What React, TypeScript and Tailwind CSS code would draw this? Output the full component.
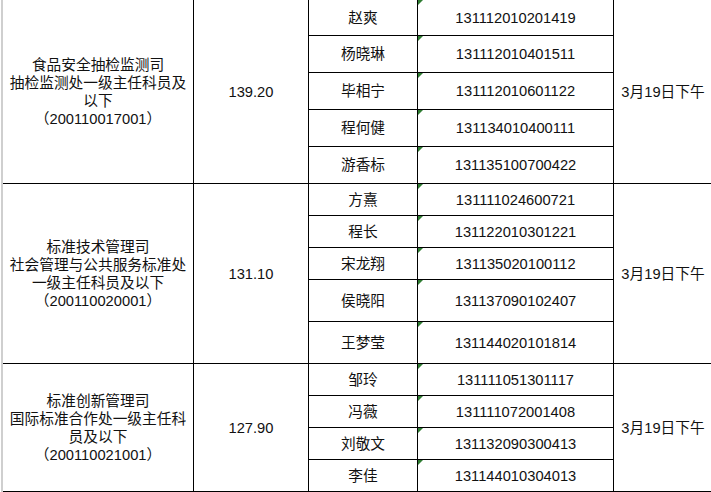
import React from "react";

type Group = {
  title: string[];
  score: string;
  people: [string, string][];
  rows: string[]; // row heights classes not needed
};

const groups = [
  {
    title: ["食品安全抽检监测司", "抽检监测处一级主任科员及", "以下", "（200110017001）"],
    score: "139.20",
    people: [
      ["赵爽", "131112010201419"],
      ["杨晓琳", "131112010401511"],
      ["毕相宁", "131112010601122"],
      ["程何健", "131134010400111"],
      ["游香标", "131135100700422"],
    ],
  },
  {
    title: ["标准技术管理司", "社会管理与公共服务标准处", "一级主任科员及以下", "（200110020001）"],
    score: "131.10",
    people: [
      ["方熹", "131111024600721"],
      ["程长", "131122010301221"],
      ["宋龙翔", "131135020100112"],
      ["侯晓阳", "131137090102407"],
      ["王梦莹", "131144020101814"],
    ],
  },
  {
    title: ["标准创新管理司", "国际标准合作处一级主任科", "员及以下", "（200110021001）"],
    score: "127.90",
    people: [
      ["邹玲", "131111051301117"],
      ["冯薇", "131111072001408"],
      ["刘敬文", "131132090300413"],
      ["李佳", "131144010304013"],
    ],
  },
];

const Tri = () => (
  <svg className="absolute left-0 top-0" width="5" height="5" viewBox="0 0 5 5">
    <polygon points="0,0 5,0 0,5" fill="#2f7d32" />
  </svg>
);

const cell = "flex items-center justify-center border-b border-r border-black text-center";

export default function App() {
  const font = { fontFamily: '"Liberation Sans", "Noto Sans CJK SC", sans-serif' };
  return (
    <div
      className="flex h-[492px] w-[711px] overflow-hidden bg-white text-[14.7px] leading-[18px] text-[#111]"
      style={font}
    >
      <div className="w-px shrink-0" />
      <div className="w-[2px] shrink-0 bg-[#cfcfcf]" />
      <div className="grid shrink-0 grid-cols-[191px_115px_109px_196px_98px] grid-rows-[36px_37px_37px_37px_37px_32px_32px_32px_42px_42px_32px_32px_32px_32px]">
        {/* Group 1 */}
        <div className={`${cell} col-start-1 row-start-1 row-span-5 flex-col`}>
          {groups[0].title.map((t) => (
            <div key={t}>{t}</div>
          ))}
        </div>
        <div className={`${cell} col-start-2 row-start-1 row-span-5`}>{groups[0].score}</div>
        <div className={`${cell} col-start-5 row-start-1 row-span-5 border-r-0`}>3月19日下午</div>
        {groups[0].people.map(([n, id], i) => (
          <React.Fragment key={id}>
            <div className={`${cell} col-start-3`} style={{ gridRowStart: i + 1 }}>
              {n}
            </div>
            <div className={`${cell} relative col-start-4`} style={{ gridRowStart: i + 1 }}>
              <Tri />
              {id}
            </div>
          </React.Fragment>
        ))}

        {/* Group 2 */}
        <div className={`${cell} col-start-1 row-start-6 row-span-5 flex-col`}>
          {groups[1].title.map((t) => (
            <div key={t}>{t}</div>
          ))}
        </div>
        <div className={`${cell} col-start-2 row-start-6 row-span-5`}>{groups[1].score}</div>
        <div className={`${cell} col-start-5 row-start-6 row-span-5 border-r-0`}>3月19日下午</div>
        {groups[1].people.map(([n, id], i) => (
          <React.Fragment key={id}>
            <div className={`${cell} col-start-3`} style={{ gridRowStart: i + 6 }}>
              {n}
            </div>
            <div className={`${cell} relative col-start-4`} style={{ gridRowStart: i + 6 }}>
              <Tri />
              {id}
            </div>
          </React.Fragment>
        ))}

        {/* Group 3 */}
        <div className={`${cell} col-start-1 row-start-11 row-span-4 flex-col`}>
          {groups[2].title.map((t) => (
            <div key={t}>{t}</div>
          ))}
        </div>
        <div className={`${cell} col-start-2 row-start-11 row-span-4`}>{groups[2].score}</div>
        <div className={`${cell} col-start-5 row-start-11 row-span-4 border-r-0`}>3月19日下午</div>
        {groups[2].people.map(([n, id], i) => (
          <React.Fragment key={id}>
            <div className={`${cell} col-start-3`} style={{ gridRowStart: i + 11 }}>
              {n}
            </div>
            <div className={`${cell} relative col-start-4`} style={{ gridRowStart: i + 11 }}>
              <Tri />
              {id}
            </div>
          </React.Fragment>
        ))}
      </div>
    </div>
  );
}
